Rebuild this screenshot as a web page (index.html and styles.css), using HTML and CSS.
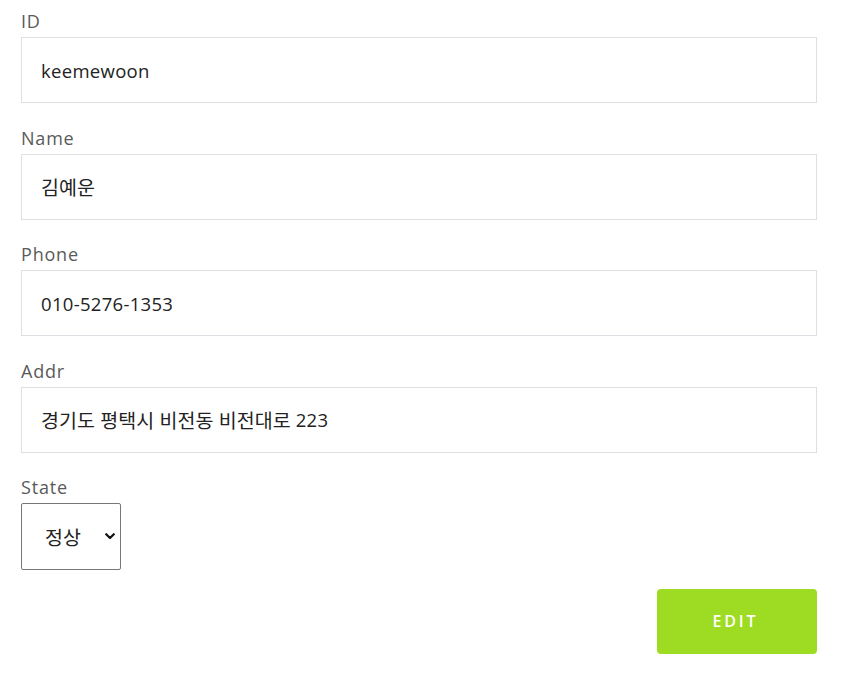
FILE: index.html
```
<!DOCTYPE html>
<html lang="ko">
<head>
<meta charset="utf-8">
<link rel="stylesheet" href="styles.css">
</head>
<body>
<form class="form">
  <div class="field">
    <label class="label">ID</label>
    <div class="input">keemewoon</div>
  </div>
  <div class="field">
    <label class="label">Name</label>
    <div class="input"><span class="ko">김예운</span></div>
  </div>
  <div class="field">
    <label class="label">Phone</label>
    <div class="input">010-5276-1353</div>
  </div>
  <div class="field">
    <label class="label">Addr</label>
    <div class="input"><span class="ko">경기도 평택시 비전동 비전대로</span>&nbsp;223</div>
  </div>
  <div class="field">
    <label class="label">State</label>
    <div class="select"><span class="ko">정상</span>
      <svg class="chev" width="10" height="7" viewBox="0 0 10 7"><path d="M1.2 1.2 L5 5 L8.8 1.2" fill="none" stroke="#111" stroke-width="2.2" stroke-linecap="round" stroke-linejoin="round"/></svg>
    </div>
  </div>
  <div class="actions">
    <button type="button" class="btn">EDIT</button>
  </div>
</form>
</body>
</html>
```
FILE: styles.css
```
html, body {
  margin: 0;
  padding: 0;
  background: #fff;
}
body {
  font-family: "Open Sans", "Noto Sans CJK KR", sans-serif;
}
.form {
  width: 796px;
  padding: 9px 0 0 21px;
  display: flex;
  flex-direction: column;
}
.field {
  display: flex;
  flex-direction: column;
  margin-bottom: 22.5px;
}
.label {
  font-size: 18px;
  font-weight: 400;
  letter-spacing: 0.8px;
  line-height: 24px;
  color: #5a5a5a;
  height: 28px;
}
.input {
  box-sizing: border-box;
  height: 66px;
  border: 1px solid #dcdfe3;
  padding: 0 19px;
  display: flex;
  align-items: center;
  font-size: 18.5px;
  letter-spacing: 0.3px;
  color: #222;
}
.ko {
  font-family: "Noto Sans CJK KR", sans-serif;
  font-size: 19.5px;
  letter-spacing: 0;
}
.select {
  box-sizing: border-box;
  width: 100px;
  height: 67px;
  border: 1px solid #777;
  border-radius: 2px;
  display: flex;
  align-items: center;
  justify-content: space-between;
  padding: 0 5px 0 23px;
  color: #222;
}
.actions {
  display: flex;
  justify-content: flex-end;
  margin-top: -4px;
}
.btn {
  width: 160px;
  height: 65px;
  background: #9edc24;
  border: none;
  border-radius: 4px;
  color: #fff;
  font-family: "Open Sans", sans-serif;
  font-weight: 600;
  font-size: 16px;
  letter-spacing: 2.8px;
  padding-left: 3px;
}
```
